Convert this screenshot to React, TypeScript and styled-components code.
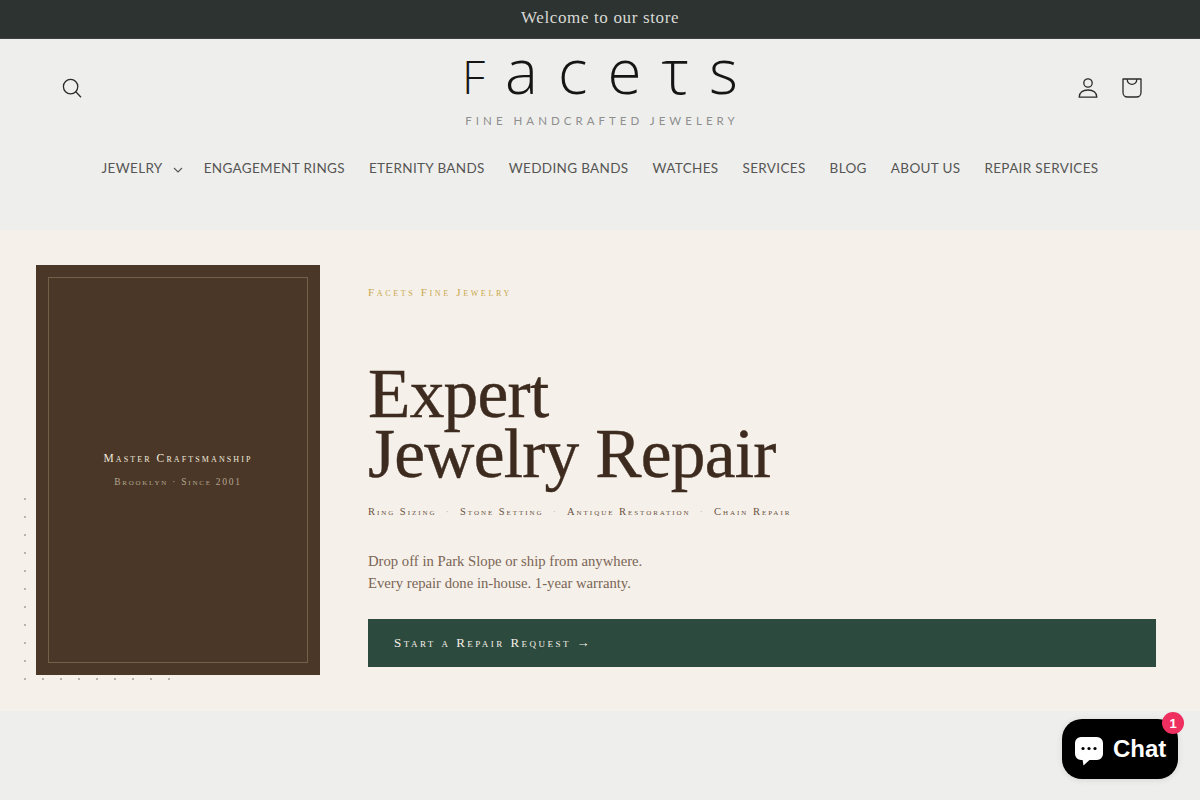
import React from "react";
import styled, { createGlobalStyle } from "styled-components";

const Global = createGlobalStyle`
  html, body { margin: 0; padding: 0; background: #eeeeed; }
  body { overflow: hidden; font-family: "Liberation Serif", serif; }
  * { box-sizing: border-box; }
`;
const Page = styled.div`
  width: 1200px; height: 800px; overflow: hidden; background: #eeeeed; position: relative;
`;
const Announcement = styled.div`
  height: 39px; background: #2c3330; border-bottom: 1px solid #3c4340; color: #d9d9d6;
  display: flex; align-items: center; justify-content: center;
  font-size: 17px; letter-spacing: 0.64px; padding-bottom: 2px;
`;
const Header = styled.header`
  height: 191px; display: flex; flex-direction: column; align-items: stretch;
  padding: 0 46px 0 50px;
`;
const TopRow = styled.div`
  height: 107px; display: grid; grid-template-columns: 1fr 280px 1fr; align-items: start;
`;
const IconBar = styled.div<{ $end?: boolean }>`
  display: flex; padding-top: 27px; justify-content: ${(p) => (p.$end ? "flex-end" : "flex-start")};
`;
const IconButton = styled.div`
  width: 44px; height: 44px; display: flex; align-items: center; justify-content: center; color: #2b2b2b;
`;
const Logo = styled.div`
  padding-top: 3px; margin-left: -4px; display: flex; flex-direction: column; align-items: center;
`;
const LogoMark = styled.div`
  width: 276px; height: 56px; display: flex; justify-content: space-between; align-items: baseline;
  font-family: "Open Sans", sans-serif; font-weight: 300; color: #151515;
`;
const LogoLetter = styled.span<{ $cap?: boolean }>`
  display: inline-block; height: 56px; line-height: 56px;
  font-size: ${(p) => (p.$cap ? "46px" : "62px")};
`;
const LogoTag = styled.div`
  margin-top: 16px; padding-left: 4px; font-family: "Lato", sans-serif; font-size: 11.5px; line-height: 14px; font-weight: 400;
  letter-spacing: 4.02px; color: #8f8f8d; white-space: nowrap;
`;
const Nav = styled.nav`
  display: flex; justify-content: center; align-items: center; gap: 24px; height: 44px; margin-left: -4px;
  font-family: "Lato", sans-serif; font-size: 13.5px; letter-spacing: 0.34px; color: #565654;
`;
const NavItem = styled.span`
  display: flex; align-items: center; white-space: nowrap;
`;
const Chevron = styled.svg`
  width: 10px; height: 6px; margin-left: 10px; margin-right: -3px; margin-top: 3px;
`;
const Hero = styled.section`
  height: 481px; background: #f5f0e9; position: relative;
  display: grid; grid-template-columns: 284px 1fr; column-gap: 48px;
  padding: 35px 44px 36px 36px;
`;
const Dots = styled.div`
  position: absolute; left: 16px; top: 260px; width: 162px; height: 198px;
  background-image: radial-gradient(circle at 9px 9px, #b9b3a8 0.9px, transparent 1.4px);
  background-size: 18px 18px;
`;
const Plate = styled.div`
  position: relative; background: #4a3728; padding: 12px;
  display: flex;
`;
const PlateFrame = styled.div`
  flex: 1; border: 1px solid #74614a; display: flex; flex-direction: column; align-items: center;
  padding-top: 174px; font-variant: small-caps;
`;
const PlateTitle = styled.div`
  font-size: 11.5px; letter-spacing: 2.1px; color: #f0e9dc; white-space: nowrap;
`;
const PlateSub = styled.div`
  margin-top: 13px; font-size: 9.5px; letter-spacing: 1.76px; color: #b4a68f; white-space: nowrap;
`;
const Content = styled.div`
  display: flex; flex-direction: column; align-items: stretch; padding-top: 20px;
`;
const Eyebrow = styled.div`
  font-variant: small-caps; font-size: 11px; letter-spacing: 2.65px; color: #c9a84c; height: 14px; line-height: 14px;
`;
const Title = styled.h1`
  margin: 65px 0 0; font-family: "Liberation Serif", serif; font-weight: 400; font-size: 69.4px; line-height: 60px;
  letter-spacing: -0.75px; color: #3d2b1f; -webkit-text-stroke: 0.4px #3d2b1f;
`;
const Services = styled.div`
  margin-top: 21px; font-variant: small-caps; font-size: 10.5px; letter-spacing: 1.96px; color: #6b5344;
  display: flex; gap: 9px; line-height: 14px; white-space: nowrap;
`;
const Dot = styled.span`
  color: #c8bdb0;
`;
const Body = styled.p`
  margin: 31px 0 0; font-size: 14.7px; line-height: 22px; color: #7a6555;
`;
const Cta = styled.div`
  margin-top: 25px; height: 48px; background: #2d4a3e; color: #f5f0e8; display: flex; align-items: center;
  padding-left: 26px; font-variant: small-caps; font-size: 13px; letter-spacing: 2.46px; white-space: nowrap;
`;
const ChatButton = styled.div`
  position: absolute; left: 1062px; top: 719px; width: 116px; height: 60px; border-radius: 20px;
  background: #000; color: #fff; display: flex; align-items: center; gap: 9px; padding-left: 12px;
  font-family: "Liberation Sans", sans-serif; font-weight: 700; font-size: 24px;
  box-shadow: 0 1px 6px rgba(0,0,0,.1);
`;
const ChatIcon = styled.svg`
  width: 30px; height: 30px; margin-top: 4px; flex: none;
`;
const ChatBadge = styled.div`
  position: absolute; right: -6px; top: -7px; width: 22px; height: 22px; border-radius: 50%;
  background: #ee2f5f; color: #fff; display: flex; align-items: center; justify-content: center;
  font-size: 13px; font-weight: 700;
`;

const navItems = ["ENGAGEMENT RINGS", "ETERNITY BANDS", "WEDDING BANDS", "WATCHES", "SERVICES", "BLOG", "ABOUT US", "REPAIR SERVICES"];
const services = ["Ring Sizing", "Stone Setting", "Antique Restoration", "Chain Repair"];

export default function App() {
  return (
    <Page>
      <Global />
      <Announcement>Welcome to our store</Announcement>
      <Header>
        <TopRow>
          <IconBar>
            <IconButton>
              <svg width="24" height="24" viewBox="0 0 24 24" fill="none" stroke="currentColor" strokeWidth="1.3">
                <circle cx="10.6" cy="10.6" r="7.2" />
                <path d="M15.8 15.8 21 21.2" />
              </svg>
            </IconButton>
          </IconBar>
          <Logo>
            <LogoMark aria-label="Facets">
              <LogoLetter $cap>F</LogoLetter>
              <LogoLetter>a</LogoLetter>
              <LogoLetter>c</LogoLetter>
              <LogoLetter>e</LogoLetter>
              <LogoLetter>τ</LogoLetter>
              <LogoLetter>s</LogoLetter>
            </LogoMark>
            <LogoTag>FINE HANDCRAFTED JEWELERY</LogoTag>
          </Logo>
          <IconBar $end>
            <IconButton>
              <svg width="24" height="24" viewBox="0 0 24 24" fill="none" stroke="currentColor" strokeWidth="1.3">
                <circle cx="12" cy="7" r="4.2" />
                <path d="M3.2 21.2c0-4.6 3.6-7.2 8.8-7.2s8.8 2.6 8.8 7.2Z" />
              </svg>
            </IconButton>
            <IconButton>
              <svg width="24" height="24" viewBox="0 0 24 24" fill="none" stroke="currentColor" strokeWidth="1.3">
                <path d="M3 3h18v13.5a4.5 4.5 0 0 1-4.5 4.5h-9A4.5 4.5 0 0 1 3 16.5Z" strokeLinejoin="round" />
                <path d="M7.2 3.2c0 7 9.6 7 9.6 0" />
              </svg>
            </IconButton>
          </IconBar>
        </TopRow>
        <Nav>
          <NavItem>
            JEWELRY
            <Chevron viewBox="0 0 10 6" fill="none" stroke="#565654" strokeWidth="1.1"><path d="M1 1l4 4 4-4" /></Chevron>
          </NavItem>
          {navItems.map((n) => <NavItem key={n}>{n}</NavItem>)}
        </Nav>
      </Header>
      <Hero>
        <Dots />
        <Plate>
          <PlateFrame>
            <PlateTitle>Master Craftsmanship</PlateTitle>
            <PlateSub>Brooklyn · Since 2001</PlateSub>
          </PlateFrame>
        </Plate>
        <Content>
          <Eyebrow>Facets Fine Jewelry</Eyebrow>
          <Title>Expert<br />Jewelry Repair</Title>
          <Services>
            {services.map((s, i) => (
              <React.Fragment key={s}>
                {i > 0 && <Dot>·</Dot>}
                <span>{s}</span>
              </React.Fragment>
            ))}
          </Services>
          <Body>Drop off in Park Slope or ship from anywhere.<br />Every repair done in-house. 1-year warranty.</Body>
          <Cta>Start a Repair Request →</Cta>
        </Content>
      </Hero>
      <ChatButton>
        <ChatIcon viewBox="0 0 30 30">
          <path fill="#fff" d="M7 1h16a6 6 0 0 1 6 6v11a6 6 0 0 1-6 6h-7.5L9.5 29.5 8.6 24H7a6 6 0 0 1-6-6V7a6 6 0 0 1 6-6Z" />
          <circle cx="9" cy="12.5" r="1.6" fill="#000" />
          <circle cx="15" cy="12.5" r="1.6" fill="#000" />
          <circle cx="21" cy="12.5" r="1.6" fill="#000" />
        </ChatIcon>
        Chat
        <ChatBadge>1</ChatBadge>
      </ChatButton>
    </Page>
  );
}
